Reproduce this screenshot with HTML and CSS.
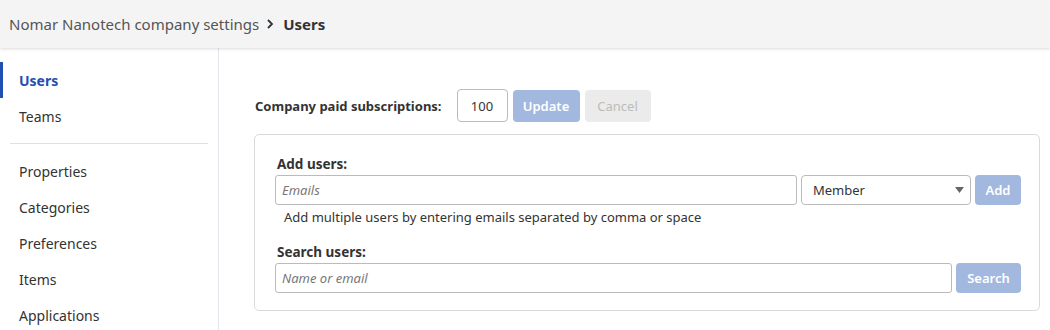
FILE: index.html
```html
<!DOCTYPE html>
<html lang="en">
<head>
    <meta charset="UTF-8">
    <title>Company settings - Users</title>
    <link rel="stylesheet" href="styles.css">
</head>
<body>
    <div class="topbar">
        <span class="crumb">Nomar Nanotech company settings</span>
        <svg class="chevron" width="8" height="10" viewBox="0 0 8 10"><path d="M2 1l4 4-4 4" fill="none" stroke="#333" stroke-width="1.8"/></svg>
        <span class="crumb-current">Users</span>
    </div>

    <div class="layout">
        <div class="sidebar">
            <a class="nav-item active">Users</a>
            <a class="nav-item">Teams</a>
            <div class="nav-divider"></div>
            <a class="nav-item">Properties</a>
            <a class="nav-item">Categories</a>
            <a class="nav-item">Preferences</a>
            <a class="nav-item">Items</a>
            <a class="nav-item">Applications</a>
        </div>

        <div class="main">
            <div class="subs-row">
                <label class="subs-label">Company paid subscriptions:</label>
                <input type="text" class="subs-input" value="100">
                <button class="btn btn-primary">Update</button>
                <button class="btn btn-muted">Cancel</button>
            </div>

            <div class="panel">
                <div class="field-label">Add users:</div>
                <div class="field-row">
                    <input type="text" class="text-input" placeholder="Emails">
                    <div class="select">
                        <span>Member</span>
                        <svg width="9" height="6" viewBox="0 0 9 6"><path d="M0 0h9L4.5 6z" fill="#666"/></svg>
                    </div>
                    <button class="btn btn-primary btn-add">Add</button>
                </div>
                <div class="help">Add multiple users by entering emails separated by comma or space</div>

                <div class="field-label">Search users:</div>
                <div class="field-row">
                    <input type="text" class="text-input" placeholder="Name or email">
                    <button class="btn btn-primary btn-search">Search</button>
                </div>
            </div>
        </div>
    </div>
</body>
</html>
```

FILE: styles.css
```css
body {
    margin: 0;
    font-family: "Noto Sans", Arial, sans-serif;
    color: #333;
    background: #fff;
}
.topbar {
    height: 48px;
    background: #f4f4f4;
    box-shadow: 0 1px 3px rgba(0, 0, 0, 0.15);
    display: flex;
    align-items: center;
    padding-left: 9px;
    position: relative;
    z-index: 1;
}
.crumb {
    font-size: 15px;
    color: #555;
}
.chevron {
    margin: 0 9px 0 7px;
}
.crumb-current {
    font-size: 15px;
    font-weight: bold;
    color: #333;
}
.layout {
    display: flex;
    height: 282px;
}
.sidebar {
    width: 219px;
    border-right: 1px solid #e3e7ec;
    padding-top: 14px;
    box-sizing: border-box;
    flex-shrink: 0;
}
.nav-item {
    display: flex;
    align-items: center;
    height: 36px;
    font-size: 14px;
    color: #333;
    border-left: 3px solid transparent;
    box-sizing: border-box;
    padding-left: 16px;
}
.nav-item.active {
    border-left-color: #1e50b4;
    color: #1e50b4;
    font-weight: bold;
}
.nav-divider {
    height: 1px;
    background: #e0e0e0;
    margin: 9px 10px 9px 10px;
}
.main {
    flex: 1;
    padding: 41px 10px 0 35px;
}
.subs-row {
    display: flex;
    align-items: center;
    height: 33px;
}
.subs-label {
    font-size: 13px;
    font-weight: bold;
    margin-left: 1px;
    margin-right: 15px;
}
.subs-input {
    width: 51px;
    height: 33px;
    box-sizing: border-box;
    border: 1px solid #bbb;
    border-radius: 4px;
    font-family: inherit;
    font-size: 13px;
    color: #333;
    text-align: center;
    padding: 0;
    margin-right: 5px;
}
.btn {
    font-family: inherit;
    font-size: 13px;
    border: none;
    border-radius: 4px;
    height: 32px;
    padding: 0;
    cursor: pointer;
}
.btn-primary {
    background: #a2b8df;
    color: #fff;
    font-weight: 600;
    width: 67px;
    margin-right: 5px;
}
.btn-muted {
    background: #ebebeb;
    color: #bbb;
    width: 66px;
}
.panel {
    margin-top: 12px;
    border: 1px solid #dadada;
    border-radius: 5px;
    padding: 18px 18px 17px 20px;
}
.field-label {
    font-size: 13.5px;
    font-weight: bold;
    padding-left: 2px;
    height: 22px;
    line-height: 22px;
}
.field-row {
    display: flex;
    gap: 4px;
    height: 30px;
}
.text-input {
    flex: 1;
    height: 30px;
    box-sizing: border-box;
    border: 1px solid #bbb;
    border-radius: 3px;
    padding: 0 6px;
    font-family: inherit;
    font-size: 13px;
}
.text-input::placeholder {
    font-style: italic;
    color: #777;
}
.select {
    width: 170px;
    height: 30px;
    box-sizing: border-box;
    border: 1px solid #bbb;
    border-radius: 4px;
    display: flex;
    align-items: center;
    justify-content: space-between;
    padding: 0 6px 0 11px;
    font-size: 13px;
    color: #333;
}
.btn-add {
    width: 46px;
    height: 30px;
    margin-right: 0;
}
.btn-search {
    width: 65px;
    height: 30px;
    margin-right: 0;
}
.help {
    font-size: 13px;
    padding-left: 9px;
    height: 24px;
    line-height: 24px;
    margin-bottom: 12px;
}
```
